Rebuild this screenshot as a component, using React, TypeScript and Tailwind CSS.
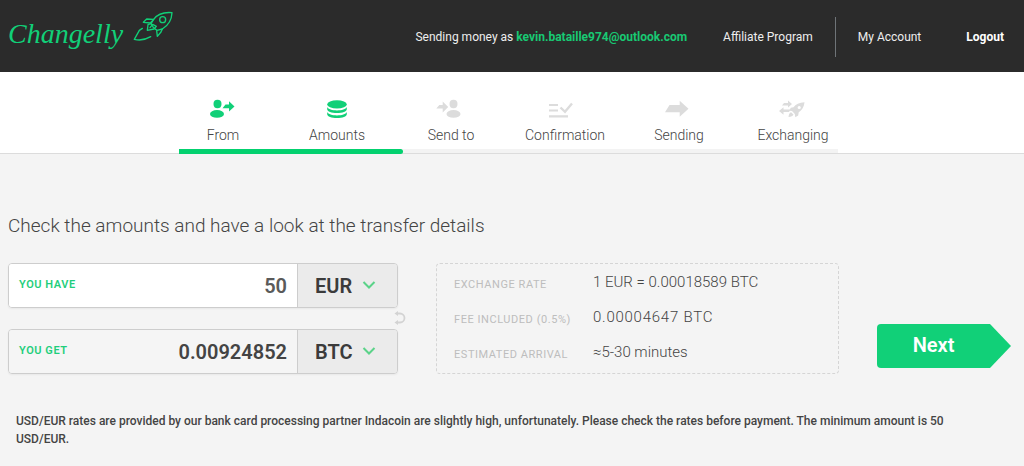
import React, { useState } from 'react';

type Step = {
  label: string;
  done: boolean;
  icon: React.ReactNode;
};

const steps: Step[] = [
  {
    label: 'From',
    done: true,
    icon: (
      <svg width="26" height="22" viewBox="0.5 0 26 22" fill="currentColor" aria-hidden="true">
        <ellipse cx="8" cy="6" rx="4" ry="4.2" />
        <ellipse cx="7.5" cy="15.9" rx="7" ry="3.9" />
        <path d="M13 10.2 16 6.6h3.5V3.2L25 8.4l-5.5 5.2v-3.4z" />
      </svg>
    ),
  },
  {
    label: 'Amounts',
    done: true,
    icon: (
      <svg width="20" height="22" viewBox="0 0 20 22" fill="currentColor" aria-hidden="true">
        <ellipse cx="10" cy="6.4" rx="9.8" ry="4.1" />
        <path d="M.2 9c1 2.200 5 3.400 9.800 3.400s8.800-1.200 9.800-3.400v2.200c0 2.200-4.400 3.900-9.800 3.900S.2 13.400.2 11.200z" />
        <path d="M.2 14c1 2.200 5 3.400 9.800 3.400s8.800-1.200 9.800-3.400v2.200c0 2.200-4.400 3.900-9.800 3.900S.2 18.400.2 16.200z" />
      </svg>
    ),
  },
  {
    label: 'Send to',
    done: false,
    icon: (
      <svg width="30" height="22" viewBox="0 0 30 22" fill="currentColor" aria-hidden="true">
        <path d="M.3 10.600 3.300 7h3.400V3.400L12.200 9l-5.500 5.400v-3.800z" />
        <ellipse cx="17.500" cy="6" rx="4" ry="4.200" />
        <ellipse cx="17.500" cy="15.900" rx="7" ry="3.900" />
      </svg>
    ),
  },
  {
    label: 'Confirmation',
    done: false,
    icon: (
      <svg width="34" height="22" viewBox="4 0 34 22" fill="currentColor" aria-hidden="true">
        <path d="M5 6h9v2H5zM5 11.500h9v2H5zM5 17.200h19v2.200H5z" />
        <path d="m16.500 9.500 4.500 4.300 7-8.300" fill="none" stroke="currentColor" strokeWidth="2.400" />
      </svg>
    ),
  },
  {
    label: 'Sending',
    done: false,
    icon: (
      <svg width="28" height="22" viewBox="0 0 28 22" fill="currentColor" aria-hidden="true">
        <path d="M0 14.200 4.500 7h10.200V2.800L23.500 10.800l-8.800 8v-4.600z" />
      </svg>
    ),
  },
  {
    label: 'Exchanging',
    done: false,
    icon: (
      <svg width="30" height="22" viewBox="0.5 0 30 22" fill="currentColor" aria-hidden="true">
        <path d="M4.500 7.500 6.500 5h4V2.500L14.500 6l-4 3.500v-2z" />
        <path d="M13 11.500 11.500 14H6v2.800L1.500 13 6 9.200v2.300z" />
        <path
          fillRule="evenodd"
          d="M27 4.200c-5.300.2-8.800 2-11 5.100l-2.700.4-1.600 3 2.800.3 2.800 2.900.5 3.300 2.900-1.800.5-3.100C24.500 12 26.600 8.900 27 4.200zm-5.300 3.700a1.600 1.600 0 1 1 0 3.200 1.600 1.600 0 0 1 0-3.200z"
        />
        <path d="M13.500 14.300c-1.800.5-2 2.500-2.500 4.700 2.500-.2 4.500-.8 5-2.500z" />
      </svg>
    ),
  },
];

const details = [
  { label: 'EXCHANGE RATE', value: '1 EUR = 0.00018589 BTC', spaced: false },
  { label: 'FEE INCLUDED (0.5%)', value: '0.00004647 BTC', spaced: true },
  { label: 'ESTIMATED ARRIVAL', value: '≈5-30 minutes', spaced: false },
];

function Logo() {
  return (
    <a href="#home" className="flex items-start text-[#11d078]">
      <span className="pt-3.5 font-['Liberation_Serif',serif] text-[28px] leading-10 italic">Changelly</span>
      <svg
        className="mt-2.5 ml-2.5"
        width="41"
        height="32"
        viewBox="0 0 123 96"
        fill="none"
        stroke="currentColor"
        strokeWidth="4"
        strokeLinejoin="round"
        strokeLinecap="round"
        aria-hidden="true"
      >
        <path d="M117 8C94 6 73 13 62 28L54 41c4 9 9 15 18 20l16-4c16-10 28-27 29-49z" />
        <circle cx="89" cy="29" r="9" />
        <path d="M62 28 52 39 31 37l10-10 21 1M88 57l-4 9-11 13-2-17" />
        <path d="m54 41-9 3-2 17 20-4 7-8-11-6-8 10" />
        <path d="M28 55l-9 6L4 88c16 4 34 1 49-8" />
      </svg>
    </a>
  );
}

type AmountFieldProps = {
  id: string;
  label: string;
  value: string;
  onChange?: (value: string) => void;
  currency: string;
  options: string[];
  onCurrency: (value: string) => void;
};

function AmountField({ id, label, value, onChange, currency, options, onCurrency }: AmountFieldProps) {
  return (
    <div className="flex h-[45px] overflow-hidden rounded border border-[#cdcdcd] shadow-xs">
      <div className={`flex min-w-0 flex-1 items-center px-2.5 ${onChange ? 'bg-white' : 'bg-[#f5f5f5]'}`}>
        <label htmlFor={id} className="shrink-0 text-[11px] font-semibold tracking-wider text-[#1fce7c]">
          {label}
        </label>
        <input
          id={id}
          type="text"
          value={value}
          readOnly={!onChange}
          onChange={(e) => onChange?.(e.target.value)}
          className={`w-full min-w-0 bg-transparent text-right text-xl font-semibold outline-none ${
            onChange ? 'text-[#5a5a5a]' : 'text-[#444]'
          }`}
        />
      </div>
      <div className="relative w-[100px] shrink-0 border-l border-[#cdcdcd] bg-[#ebebeb]">
        <select
          aria-label={`${label} currency`}
          value={currency}
          onChange={(e) => onCurrency(e.target.value)}
          className="h-full w-full appearance-none pl-[17px] text-xl font-semibold text-[#3b3b3b] outline-none"
        >
          {options.map((option) => (
            <option key={option}>{option}</option>
          ))}
        </select>
        <svg
          className="pointer-events-none absolute top-4 right-[21px]"
          width="14"
          height="10"
          viewBox="0 0 14 10"
          fill="none"
          stroke="#5bd389"
          strokeWidth="2"
          aria-hidden="true"
        >
          <path d="m1.500 2 5.500 5.500L12.500 2" />
        </svg>
      </div>
    </div>
  );
}

export default function App() {
  const [amount, setAmount] = useState('50');
  const [from, setFrom] = useState('EUR');
  const [to, setTo] = useState('BTC');

  return (
    <div className="min-h-screen bg-[#f4f4f4] font-[Roboto,sans-serif] text-[#444]">
      <header className="flex h-[72px] items-start justify-between bg-[#2b2b2b] pr-5 pl-2">
        <Logo />
        <div className="flex h-full items-center pt-0.5 text-xs text-[#eee]">
          <p className="mr-9">
            Sending money as <span className="font-bold text-[#18c973]">kevin.bataille974@outlook.com</span>
          </p>
          <a href="#affiliate">Affiliate Program</a>
          <span className="mx-[22px] h-10 w-px bg-[#6f7478]" />
          <a href="#account" className="mr-[45px]">
            My Account
          </a>
          <a href="#logout" className="font-bold text-white">
            Logout
          </a>
        </div>
      </header>

      {/* Steps */}
      <nav className="flex flex-col items-center border-b border-[#dcdcdc] bg-white pt-[26px] pr-2">
        <ol className="grid w-full max-w-[684px] grid-cols-6">
          {steps.map((step) => (
            <li key={step.label} className="flex flex-col items-center">
              <span className={step.done ? 'text-[#11d078]' : 'text-[#dcdcdc]'}>{step.icon}</span>
              <span className="mt-[5px] text-sm leading-5 font-light">{step.label}</span>
            </li>
          ))}
        </ol>
        <div className="mt-1 h-1 w-full max-w-[659px] bg-[#f3f3f3]">
          <div className="h-[5px] w-[34%] rounded-r-full bg-[#03d16f]" />
        </div>
      </nav>

      <main className="pr-[13px] pl-2">
        <h1 className="pt-[58px] text-[19px] leading-7 font-light">
          Check the amounts and have a look at the transfer details
        </h1>

        <form
          className="mt-[23px] grid grid-cols-[390fr_403fr_134px] gap-[38px]"
          onSubmit={(e) => e.preventDefault()}
        >
          <div className="relative flex flex-col justify-between">
            <AmountField
              id="have"
              label="YOU HAVE"
              value={amount}
              onChange={setAmount}
              currency={from}
              options={['EUR', 'USD']}
              onCurrency={setFrom}
            />
            <button type="button" aria-label="Swap currencies" className="absolute top-12 -right-2 cursor-pointer">
              <svg width="12" height="14" viewBox="0 0 12 14" fill="none" stroke="#d3d3d3" aria-hidden="true">
                <path d="M3 2.500h3a4.500 4.500 0 0 1 0 9H3" strokeWidth="1.800" />
                <path d="M4 0v5L.5 2.500zM4 9v5L.5 11.500z" fill="#d3d3d3" stroke="none" />
              </svg>
            </button>
            <AmountField
              id="get"
              label="YOU GET"
              value="0.00924852"
              currency={to}
              options={['BTC', 'ETH', 'LTC']}
              onCurrency={setTo}
            />
          </div>

          <dl className="flex h-[111px] flex-col justify-center rounded border border-dashed border-[#d5d5d5] px-[17px] pb-0.5">
            {details.map((row) => (
              <div key={row.label} className="flex h-[35px] items-center">
                <dt className="w-[139px] shrink-0 pt-1.5 text-[11px] tracking-wider text-[#bdbdbd]">{row.label}</dt>
                <dd className={`text-[15px] font-light ${row.spaced ? 'tracking-wider' : ''}`}>{row.value}</dd>
              </div>
            ))}
          </dl>

          <button type="submit" className="mb-1.5 flex h-11 cursor-pointer self-end">
            <span className="flex h-full flex-1 items-center justify-center rounded-l bg-[#11d078] pb-0.5 text-xl font-semibold text-white">
              Next
            </span>
            <svg width="21" height="44" viewBox="0 0 21 44" fill="#11d078" aria-hidden="true">
              <path d="M0 0 21 22 0 44z" />
            </svg>
          </button>
        </form>

        <p className="mt-[38px] pr-9 pb-4 pl-2 text-xs leading-[18px] font-medium">
          USD/EUR rates are provided by our bank card processing partner Indacoin are slightly high, unfortunately. Please
          check the rates before payment. The minimum amount is 50 USD/EUR.
        </p>
      </main>
    </div>
  );
}
